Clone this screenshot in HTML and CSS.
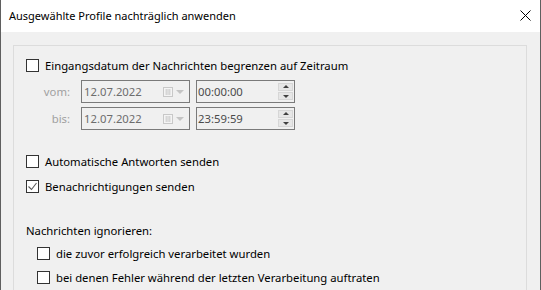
FILE: index.html
```html
<!DOCTYPE html>
<html>
<head>
  <meta charset="UTF-8">
  <title>Ausgewählte Profile nachträglich anwenden</title>
  <link rel="stylesheet" href="styles.css">
</head>
<body>
  <div class="window">
    <div class="titlebar">
      <span class="title">Ausgewählte Profile nachträglich anwenden</span>
      <svg class="close" width="11" height="11" viewBox="0 0 11 11">
        <path d="M0.5 0.5 L10.5 10.5 M10.5 0.5 L0.5 10.5" stroke="#000" stroke-width="1" fill="none"/>
      </svg>
    </div>
    <div class="content">
      <div class="panel">
        <div class="check first"><span class="box"></span>Eingangsdatum der Nachrichten begrenzen auf Zeitraum</div>

        <div class="range">
          <span class="range-label">vom:</span>
          <div class="field date">
            <span class="value">12.07.2022</span>
            <svg class="cal" width="10" height="10" viewBox="0 0 10 10">
              <rect x="0.5" y="0.5" width="9" height="9" fill="#f4f4f4" stroke="#c8c8c8"/>
              <path d="M2 3h6M2 5h6M2 7h6M3.5 2v6M5 2v6M6.5 2v6" stroke="#d6d6d6"/>
            </svg>
            <span class="drop"></span>
          </div>
          <div class="field time">
            <span class="value">00:00:00</span>
            <div class="spin"><span class="up"></span><span class="down"></span></div>
          </div>

          <span class="range-label">bis:</span>
          <div class="field date">
            <span class="value">12.07.2022</span>
            <svg class="cal" width="10" height="10" viewBox="0 0 10 10">
              <rect x="0.5" y="0.5" width="9" height="9" fill="#f4f4f4" stroke="#c8c8c8"/>
              <path d="M2 3h6M2 5h6M2 7h6M3.5 2v6M5 2v6M6.5 2v6" stroke="#d6d6d6"/>
            </svg>
            <span class="drop"></span>
          </div>
          <div class="field time">
            <span class="value">23:59:59</span>
            <div class="spin"><span class="up"></span><span class="down"></span></div>
          </div>
        </div>

        <div class="check auto"><span class="box"></span>Automatische Antworten senden</div>
        <div class="check notify"><span class="box checked">
          <svg width="11" height="11" viewBox="0 0 11 11"><path d="M1.5 5.5 L4.5 8.5 L9.5 2" stroke="#5a5a5a" stroke-width="1.1" fill="none"/></svg>
        </span>Benachrichtigungen senden</div>

        <div class="group-label">Nachrichten ignorieren:</div>
        <div class="check sub one"><span class="box"></span>die zuvor erfolgreich verarbeitet wurden</div>
        <div class="check sub two"><span class="box"></span>bei denen Fehler während der letzten Verarbeitung auftraten</div>
      </div>
    </div>
  </div>
</body>
</html>
```

FILE: styles.css
```css
body {
  margin: 0;
  font-family: "Noto Sans", "Open Sans", sans-serif;
  font-size: 11.3px;
  color: #000;
  background: #f0f0f0;
}
.window {
  width: 539px;
  height: 290px;
  border-left: 1px solid #5f5f5f;
  border-right: 1px solid #5f5f5f;
  background: #f0f0f0;
  overflow: hidden;
}
.titlebar {
  height: 31px;
  background: #fff;
  display: flex;
  align-items: center;
  justify-content: space-between;
  padding: 0 9px 1px 8px;
}
.title {
  font-size: 11px;
}
.content {
  padding: 13px 13px 0 12px;
}
.panel {
  border: 1px solid #dcdcdc;
  padding: 11px 12px 20px 12px;
  height: 260px;
}
.check {
  display: flex;
  align-items: center;
  height: 17px;
  line-height: 17px;
}
.box {
  width: 11px;
  height: 11px;
  border: 1px solid #333;
  background: #fff;
  margin-right: 6px;
  display: flex;
  align-items: center;
  justify-content: center;
  flex: none;
}
.range {
  display: grid;
  grid-template-columns: 55px 115px 99px;
  grid-auto-rows: 23px;
  row-gap: 4px;
  margin-top: 6px;
}
.range-label {
  color: #a0a0a0;
  text-align: right;
  line-height: 23px;
  padding-right: 11px;
}
.field {
  border: 1px solid #7a7a7a;
  background: #f0f0f0;
  display: flex;
  align-items: center;
  color: #6d6d6d;
  box-sizing: border-box;
}
.field.date {
  width: 109px;
  padding-left: 2px;
}
.field.time {
  width: 99px;
  padding-left: 1px;
  color: #4a4a4a;
}
.field .value {
  flex: 1;
}
.cal {
  margin-right: 3px;
}
.drop {
  width: 0;
  height: 0;
  border-left: 4px solid transparent;
  border-right: 4px solid transparent;
  border-top: 4px solid #c4c4c4;
  margin-right: 5px;
}
.spin {
  display: flex;
  flex-direction: column;
  gap: 1px;
  margin-right: 1px;
}
.spin span {
  width: 15px;
  height: 8px;
  box-sizing: border-box;
  background: #e6e6e6;
  border: 1px solid #d6d6d6;
  position: relative;
}
.spin span::after {
  content: "";
  position: absolute;
  left: 4px;
  border-left: 3px solid transparent;
  border-right: 3px solid transparent;
}
.spin .up::after {
  top: 1px;
  border-bottom: 3px solid #404040;
}
.spin .down::after {
  top: 2px;
  border-top: 3px solid #404040;
}
.check.auto {
  margin-top: 23px;
}
.check.notify {
  margin-top: 8px;
}
.group-label {
  margin-top: 27px;
  height: 17px;
  line-height: 17px;
}
.check.sub {
  padding-left: 11px;
}
.check.sub.one {
  margin-top: 6px;
}
.check.sub.two {
  margin-top: 7px;
}
```
